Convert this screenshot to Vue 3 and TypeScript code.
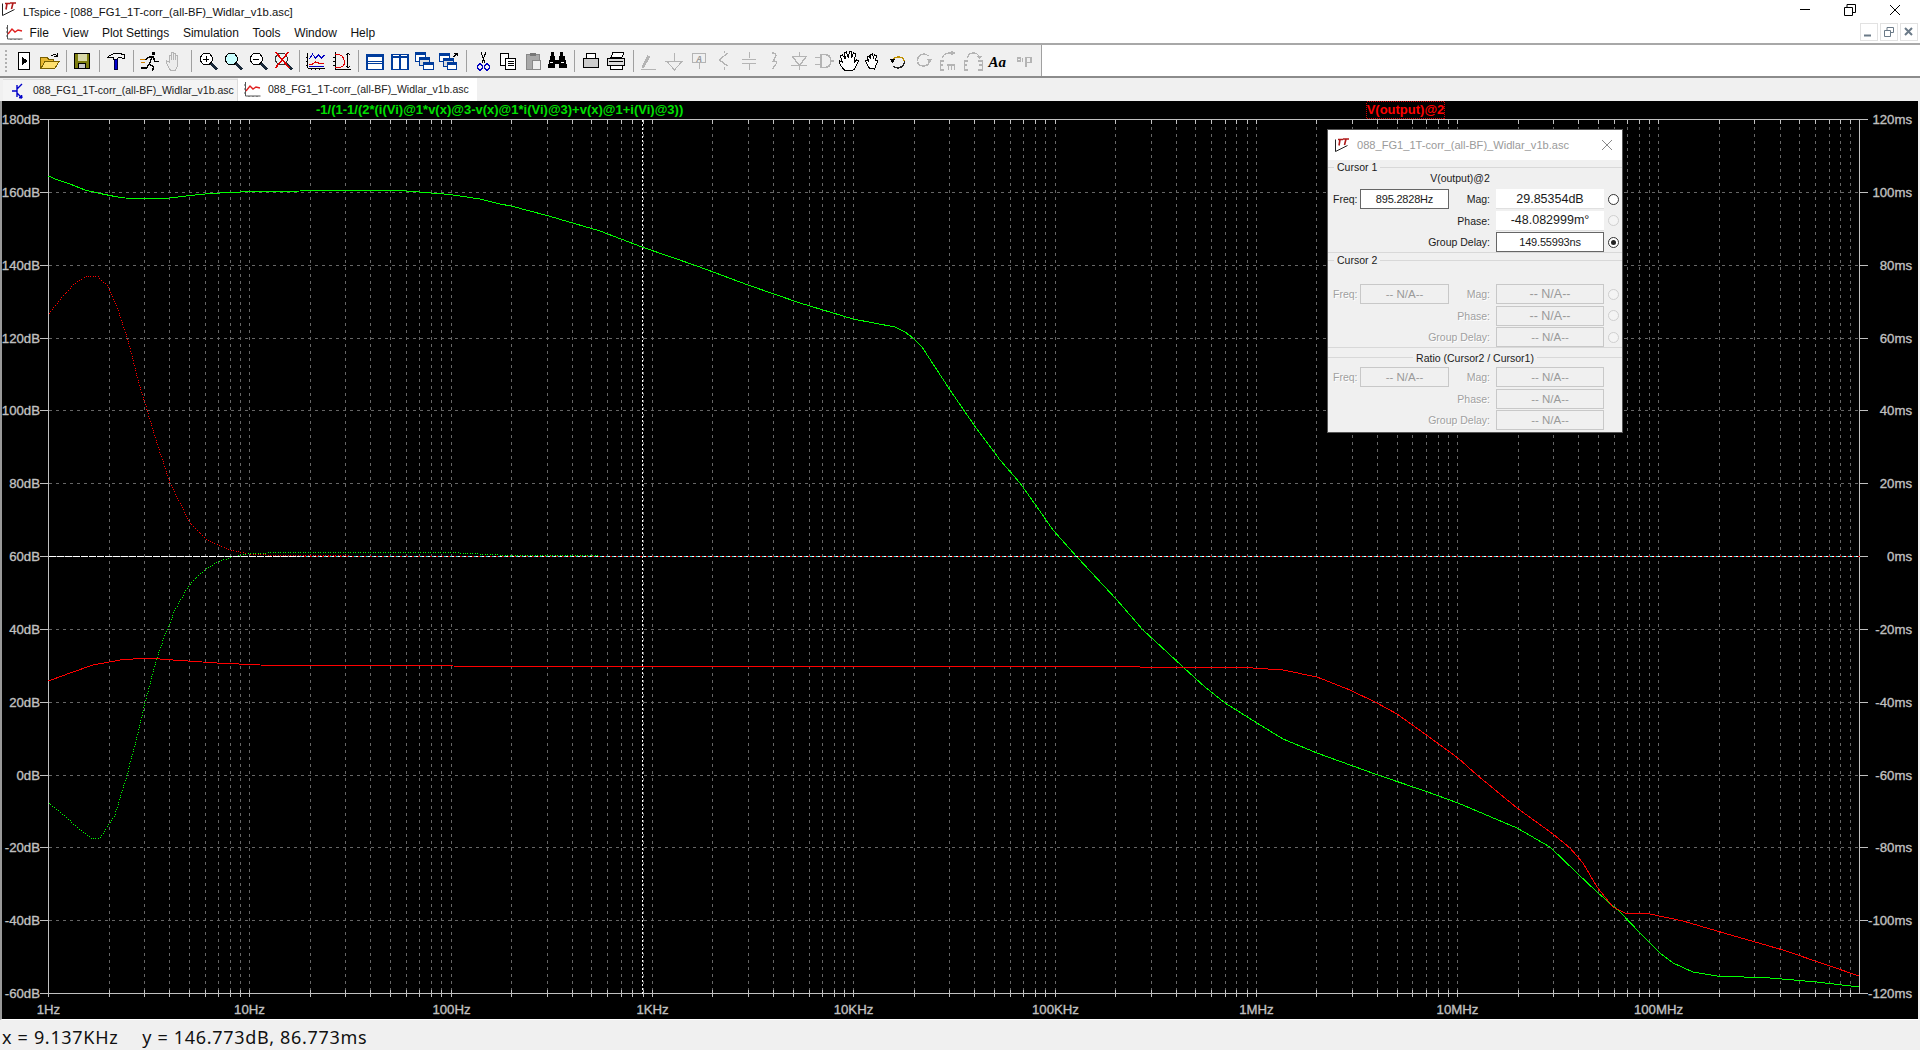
<script setup lang="ts">
interface Shape { d?: string; s?: string; f?: string; w?: number; t?: string; x?: number; y?: number; fs?: number; ff?: string }
interface Tool { sep?: boolean; shapes?: Shape[] }

const fileName = '088_FG1_1T-corr_(all-BF)_Widlar_v1b.asc'
const menus = ['File', 'View', 'Plot Settings', 'Simulation', 'Tools', 'Window', 'Help']

const decade = 201.3
const left = 48.5
const right = 1859.5
const top = 119.5
const bottom = 993.5
const xAt = (l: number) => Math.round(left + decade * l - 0.5) + 0.5
const majors = Array.from({ length: 9 }, (_, i) => xAt(i))
const verticals: { x: number; major: boolean }[] = []
for (let d = 0; d < 9; d++) {
  for (let m = 1; m < 10; m++) {
    const l = d + Math.log10(m)
    verticals.push({ x: xAt(l), major: m === 1 })
  }
}
const yLabels = Array.from({ length: 13 }, (_, i) => {
  const y = Math.round(top + (i * (bottom - top)) / 12 - 0.5) + 0.5
  return { y, db: `${180 - i * 20}dB`, ms: `${120 - i * 20}ms` }
})
const xLabels = ['1Hz', '10Hz', '100Hz', '1KHz', '10KHz', '100KHz', '1MHz', '10MHz', '100MHz']

const greenSolid = '48.5,176 55,179 70,184 85,190 100,193.5 115,196.5 125,198 150,198.5 170,198 190,195.5 210,193.5 240,192 280,191.5 320,190.5 400,190.5 450,194.5 480,199 500,204 511,206 547,215.5 600,231 642,247 697,266 748,285 800,303 853,319 895,327 905,332 913,338 922,347 950,390 974,425 1000,460 1020,483 1037,507 1053,530 1077,557 1117,600 1143,630 1154,640 1183,667 1205,687 1225,703 1257,723 1283,739 1317,753 1375,774 1425,791 1458,803 1517,828 1550,847 1577,873 1597,892 1620,912 1640,933 1660,953 1673,963 1693,972 1717,976 1770,978 1817,982 1859,987'
const redSolid = '48.5,681 70,673 93,665 120,660 147,658 173,660 217,663 260,665 300,665.5 600,666.5 1140,667 1253,668 1283,670 1317,677 1350,690 1377,703 1397,714 1425,734 1458,758 1477,775 1517,808 1553,834 1570,848 1583,863 1597,887 1613,907 1625,913 1650,914 1683,921 1717,931 1783,950 1827,965 1859,976'
const redDotsPts = '49,313 60,300 73,285 87,276 97,276 107,285 117,307 128,340 138,380 147,410 157,443 170,483 190,523 207,540 230,550 250,554 280,555.7 350,556'
const greenDotsPts = '49,803 66,817 80,830 92,839 100,838 110,823 115,815 127,775 135,745 145,703 155,665 163,640 175,610 185,592 195,579 207,568 220,561 233,557 247,554 273,552.7 340,552.3 450,552.5 500,555 600,556'

function dotted(points: string, step = 2.5): string {
  const pts = points.split(' ').map(p => p.split(',').map(Number))
  let out = ''
  let carry = 0
  for (let i = 1; i < pts.length; i++) {
    const [x0, y0] = pts[i - 1]
    const [x1, y1] = pts[i]
    const len = Math.hypot(x1 - x0, y1 - y0)
    let t = carry
    while (t < len) {
      const x = Math.floor(x0 + ((x1 - x0) * t) / len)
      const y = Math.floor(y0 + ((y1 - y0) * t) / len)
      out += `M${x} ${y}h1v1h-1z`
      t += step
    }
    carry = t - len
  }
  return out
}
const redDots = dotted(redDotsPts)
const greenDots = dotted(greenDotsPts)

const ltMark: Shape[] = [
  { d: 'M1.5 2.5v12l12-6', s: '#222', f: 'none' },
  { d: 'M4 2.5h5M6 2.5l-1 6M9 2h6M12 2l-1.5 6', s: '#b01818', w: 1.6 }
]
const plotMark: Shape[] = [
  { d: 'M2.5 1v14h15', s: '#555', f: 'none' },
  { d: 'M3 10l4-5 3 3 3-2 4 1', s: '#e02020', f: 'none', w: 1.4 },
  { d: 'M1 4h1M1 8h1M1 12h1M6 15v1M10 15v1M14 15v1', s: '#555' }
]

const G = '#b4b4b4'
const toolbar: Tool[] = [
  { shapes: [{ d: 'M6.5 3.5h11v17h-11z', s: '#000', f: '#fff' }, { d: 'M9.5 8l6 4-6 4z', f: '#000' }] },
  { shapes: [{ d: 'M3.5 19.5v-11h6l2 2h5v9z', s: '#7a6000', f: '#e8b830' }, { d: 'M3.5 19.5l4-7h14l-4 7z', s: '#7a6000', f: '#ffe070' }, { d: 'M14 7q3-3 6 0M20 4v3h-3', s: '#000', f: 'none' }] },
  { sep: true },
  { shapes: [{ d: 'M4.5 4.5h15v15h-15z', s: '#000', f: '#7f7f10' }, { d: 'M7.5 4.5h9v7h-9z', f: '#d8d8a8' }, { d: 'M8.5 14.5h7v5h-7z', s: '#000', f: '#c8c8c8' }] },
  { sep: true },
  { shapes: [{ d: 'M3.5 8q6-6 17-2v4q-4-2-7-1v1h-4v-1q-4-1-6-1z', s: '#000', f: '#f4f4f4' }, { d: 'M10 10h3.5v10h-3.5z', f: '#0000d0', s: '#000040' }] },
  { sep: true },
  { shapes: [{ d: 'M14 3h3v3h-3z', f: '#000' }, { d: 'M6 11l5-3 4 0 1 4 4 1M13 9l-2 6 4 3-1 4M11 15l-3 4H3', s: '#000', f: 'none', w: 1.4 }, { d: 'M2 10h5M3 13h4', s: '#d08000' }] },
  { shapes: [{ d: 'M8 21q-4-5-4-9l3 1V6h2v5V3h2v8V4h2v7V6h2v10q0 3-2 5z', s: G, f: '#ececec' }] },
  { sep: true },
  { shapes: [{ d: 'M10 4a6 6 0 1 0 .01 0z', s: '#000', f: '#fff' }, { d: 'M7 10h6M10 7v6', s: '#000' }, { d: 'M14.5 14.5l6 6', s: '#1a2a3a', w: 2.4 }] },
  { shapes: [{ d: 'M10 4a6 6 0 1 0 .01 0z', s: '#000', f: '#c8ffff' }, { d: 'M14.5 14.5l6 6', s: '#1a2a3a', w: 2.4 }] },
  { shapes: [{ d: 'M10 4a6 6 0 1 0 .01 0z', s: '#000', f: '#fff' }, { d: 'M7 10h6', s: '#000' }, { d: 'M14.5 14.5l6 6', s: '#1a2a3a', w: 2.4 }] },
  { shapes: [{ d: 'M10 4a6 6 0 1 0 .01 0z', s: '#333', f: '#e8f4f4' }, { d: 'M14.5 14.5l6 6', s: '#1a2a3a', w: 2.4 }, { d: 'M4 3l14 16M17 3L4 19', s: '#e00000', w: 1.5 }] },
  { sep: true },
  { shapes: [{ d: 'M3.5 19.5h17', s: '#000', f: 'none' }, { d: 'M3.5 4v15', s: '#000', f: 'none' }, { d: 'M5 10l3-5 3 4 3-3 3 3 3-3', s: '#0000c0', f: 'none' }, { d: 'M5 15h3l3-2 3 1h6', s: '#e00000', f: 'none' }, { d: 'M5 17h15', s: '#0000c0', f: 'none' }, { d: 'M3 8h-1M3 12h-1M3 16h-1M7 20v1M11 20v1M15 20v1', s: '#000' }] },
  { shapes: [{ d: 'M6.5 3v17h15', s: '#000', f: 'none' }, { d: 'M6 5q8 0 9 7t-9 7', s: '#e00000', f: 'none' }, { d: 'M18.5 4v15M16.5 6l2-2 2 2M16.5 17l2 2 2-2', s: '#000', f: 'none' }, { d: 'M6 8h-2M6 12h-2M6 16h-2', s: '#000' }] },
  { sep: true },
  { shapes: [{ d: 'M3.5 5.5h16v15h-16z', s: '#003c9c', f: '#fff', w: 1.4 }, { d: 'M3.5 7h16M3.5 12.5h16M3.5 14.5h16', s: '#003c9c', w: 1.6 }] },
  { shapes: [{ d: 'M3.5 5.5h16v15h-16z', s: '#003c9c', f: '#fff', w: 1.4 }, { d: 'M3.5 7.5h16', s: '#003c9c', w: 2 }, { d: 'M11.5 5.5v15', s: '#003c9c', w: 1.4 }] },
  { shapes: [{ d: 'M3.5 3.5h10v9h-10z', s: '#003c9c', f: '#fff' }, { d: 'M3.5 5h10', s: '#003c9c', w: 2 }, { d: 'M7.5 8.5h10v8h-10z', s: '#003c9c', f: '#ddd' }, { d: 'M7.5 10h10', s: '#003c9c', w: 2 }, { d: 'M11.5 13.5h10v7h-10z', s: '#003c9c', f: '#fff' }, { d: 'M11.5 15h10', s: '#003c9c', w: 2 }] },
  { shapes: [{ d: 'M2.5 4.5h10v8h-10z', s: '#003c9c', f: '#fff' }, { d: 'M2.5 6h10', s: '#003c9c', w: 2 }, { d: 'M6.5 9.5h10v8h-10z', s: '#003c9c', f: '#ddd' }, { d: 'M6.5 11h10', s: '#003c9c', w: 2 }, { d: 'M10.5 13.5h9v7h-9z', s: '#003c9c', f: '#fff' }, { d: 'M10.5 15h9', s: '#003c9c', w: 2 }, { d: 'M16 8l4-4M17 4h3v3', s: '#000', f: 'none' }] },
  { sep: true },
  { shapes: [{ d: 'M9.5 3l4 11M14.5 3l-4 11', s: '#000', f: 'none' }, { d: 'M8.5 15a2.5 3 0 1 0 .01 0zM15.5 15a2.5 3 0 1 0 .01 0z', s: '#0000c0', f: 'none', w: 1.4 }] },
  { shapes: [{ d: 'M4.5 4.5h8v12h-8z', s: '#000', f: '#fff' }, { d: 'M9.5 9.5h10v11h-10z', s: '#000', f: '#fff' }, { d: 'M11.5 12.5h6M11.5 14.5h6M11.5 16.5h6', s: '#000' }] },
  { shapes: [{ d: 'M5.5 5.5h13v15h-13z', s: '#888', f: '#a8a8a8' }, { d: 'M9 4h6v3H9z', f: '#777' }, { d: 'M11.5 11.5h8v9h-8z', s: '#888', f: '#eee' }] },
  { shapes: [{ d: 'M5 7h5v4h4V7h5l3 12h-8v-4h-4v4H2z', f: '#000' }, { d: 'M6 3h3v4H6zM15 3h3v4h-3z', f: '#000' }, { d: 'M5 13h3M16 13h3', s: '#fff' }] },
  { sep: true },
  { shapes: [{ d: 'M7.5 4.5h9v5h-9z', s: '#000', f: '#fff' }, { d: 'M4.5 9.5h15v9h-15z', s: '#000', f: '#ccc' }] },
  { shapes: [{ d: 'M8.5 3.5h11l-2 5h-11z', s: '#000', f: '#fff' }, { d: 'M3.5 9.5h17v7h-17z', s: '#000', f: '#ddd' }, { d: 'M6.5 16.5h12v4h-12z', s: '#000', f: '#fff' }, { d: 'M5 12h14', s: '#000' }] },
  { sep: true },
  { shapes: [{ d: 'M4 18L10 6l3 1.5-7 12z', f: G }, { d: 'M4 20.5h15', s: G }] },
  { shapes: [{ d: 'M12 4v8M3 12h18M5 13l7 8 7-8', s: G, f: 'none' }] },
  { shapes: [{ d: 'M5.5 4.5h13v9h-13zM12 14v6', s: G, f: 'none' }, { t: 'A', x: 9, y: 12.5, fs: 9, ff: 'Liberation Mono', f: '#999' }] },
  { shapes: [{ d: 'M15 4l-8 7 8 6M12 2v2M12 18v3', s: G, f: 'none', w: 1.3 }] },
  { shapes: [{ d: 'M12 3v6M12 15v6M5 10.5h14M5 14.5h14', s: G, f: 'none', w: 1.3 }] },
  { shapes: [{ d: 'M10 4q5 0 3 4t-2 4q5 0 2 4t-3 4', s: G, f: 'none', w: 1.3 }] },
  { shapes: [{ d: 'M5 7.5h14l-7 9zM4 16.5h16M12 3v4M12 17v4', s: G, f: 'none', w: 1.3 }] },
  { shapes: [{ d: 'M8.5 5.5v13h3q7 0 7-6.500t-7-6.500zM3 8.500h5M3 15.500h5M19 12h3', s: G, f: 'none', w: 1.5 }] },
  { shapes: [{ d: 'M8 21q-5-5-5-9l3 1-2-6 2-1 3 4-1-6 2-1 2 6 1-7h2v7l2-5 2 1-1 8 2-2 2 1-4 8q-2 2-4 2z', s: '#000', f: '#fff', w: 1 }] },
  { shapes: [{ d: 'M8 19q-3-4-4-7l2-1 1 1-1-4 2-1 1 3V6l2-1 1 4 1-3 2 1-1 4 2 0 0 2-3 7z', s: '#000', f: '#fff', w: 1 }] },
  { shapes: [{ d: 'M6 12a6.500 6.500 0 0 1 12 0', s: '#c09000', f: 'none', w: 1.4 }, { d: 'M18 12a6.500 6.500 0 0 1-11 5', s: '#222', f: 'none', w: 1.4 }, { d: 'M3 10h6l-3 4z', f: '#000' }] },
  { shapes: [{ d: 'M6 12a6.500 6.500 0 0 1 11-5M18 13a6.500 6.500 0 0 1-12 0', s: G, f: 'none', w: 1.4 }, { d: 'M15 10h6l-3 4z', f: G }] },
  { shapes: [{ d: 'M4 21v-9h4M4 16h3M4 21h4M12 16v5M15 16v5M18 16v5M11 16h8M6 9q1-5 7-5h4M15 2l3 2-3 2', s: G, f: 'none', w: 1.3 }] },
  { shapes: [{ d: 'M3 12h4M3 12v9h4M3 16h3M17 12h4v9h-4M18 16h3M6 9q1-5 6-5t6 5M16 7l2 2 2-2', s: G, f: 'none', w: 1.3 }] },
  { shapes: [{ t: 'Aa', x: 2, y: 18, fs: 15, ff: 'Liberation Serif', f: '#000' }] },
  { shapes: [{ d: 'M6 9h3v3H6zM14.500 8.500h5v5h-5zM14.500 8.500v9M11 9v4', s: G, f: 'none', w: 1.2 }] }
]

const rows = [
  { label: 'Freq:', value: '895.2828Hz', mag: 'Mag:', magv: '29.85354dB', radio: 'on' },
  { label: '', value: '', mag: 'Phase:', magv: '-48.082999m°', radio: 'off' },
  { label: '', value: '', mag: 'Group Delay:', magv: '149.55993ns', radio: 'dot' }
]
const naRows = ['Mag:', 'Phase:', 'Group Delay:']
</script>

<template>
  <div class="app">
    <header class="titlebar">
      <svg class="ticon" width="18" height="17" viewBox="0 0 18 17">
        <path v-for="(p, i) in ltMark" :key="i" :d="p.d" :stroke="p.s" :fill="p.f ?? 'none'" :stroke-width="p.w ?? 1" />
      </svg>
      <span class="ttext">LTspice - [{{ fileName }}]</span>
      <div class="wincontrols">
        <svg width="12" height="12" viewBox="0 0 12 12"><path d="M1 5.500h10" stroke="#000" fill="none" /></svg>
        <svg width="12" height="12" viewBox="0 0 12 12"><path d="M0.500 3.500h8v8h-8zM3 3.500v-3h8.500v8h-3" stroke="#000" fill="none" /></svg>
        <svg width="12" height="12" viewBox="0 0 12 12"><path d="M1 1l10 10M11 1L1 11" stroke="#000" fill="none" /></svg>
      </div>
    </header>

    <nav class="menubar">
      <svg class="micon" width="20" height="18" viewBox="0 0 20 18">
        <path v-for="(p, i) in plotMark" :key="i" :d="p.d" :stroke="p.s" :fill="p.f ?? 'none'" :stroke-width="p.w ?? 1" />
      </svg>
      <span v-for="m in menus" :key="m" class="menu">{{ m }}</span>
      <div class="mdi">
        <span class="mdibtn"><svg width="12" height="12" viewBox="0 0 12 12"><path d="M1 9.500h7" stroke="#6b7a88" stroke-width="2" /></svg></span>
        <span class="mdibtn"><svg width="12" height="12" viewBox="0 0 12 12"><path d="M1.500 4.500h6v6h-6zM4 4V1.500h6.500v5H8" stroke="#6b7a88" fill="none" /></svg></span>
        <span class="mdibtn"><svg width="12" height="12" viewBox="0 0 12 12"><path d="M2 2l7 7M9 2l-7 7" stroke="#6b7a88" stroke-width="2" /></svg></span>
      </div>
    </nav>

    <div class="toolrow">
      <div class="toolbar">
        <div class="grip"></div>
        <template v-for="(tool, i) in toolbar" :key="i">
          <i v-if="tool.sep" class="sep"></i>
          <svg v-else class="tool" width="24" height="24" viewBox="0 0 24 24">
            <template v-for="(p, j) in tool.shapes" :key="j">
              <text v-if="p.t" :x="p.x" :y="p.y" :font-size="p.fs" :font-family="p.ff" :fill="p.f" font-style="italic" font-weight="700">{{ p.t }}</text>
              <path v-else :d="p.d" :stroke="p.s ?? 'none'" :fill="p.f ?? 'none'" :stroke-width="p.w ?? 1" />
            </template>
          </svg>
        </template>
      </div>
    </div>

    <div class="tabs">
      <div class="tab">
        <svg width="18" height="18" viewBox="0 0 18 18"><path d="M4 9h5M9 3v12M9 7l5-5M9 11l5 5M14 16l-3-.5M14 16l-.5-3" stroke="#0000c8" stroke-width="1.400" fill="none" /></svg>
        <span>{{ fileName }}</span>
      </div>
      <div class="tab active">
        <svg width="20" height="18" viewBox="0 0 20 18">
          <path v-for="(p, i) in plotMark" :key="i" :d="p.d" :stroke="p.s" :fill="p.f ?? 'none'" :stroke-width="p.w ?? 1" />
        </svg>
        <span>{{ fileName }}</span>
      </div>
    </div>

    <main class="plot">
      <svg class="chart" width="1916" height="919" viewBox="2 101 1916 919">
        <g class="crisp">
          <path v-for="v in verticals.filter(q => q.x > left)" :key="'v' + v.x" :d="`M${v.x} ${top}V${bottom}`" class="grid" />
          <path v-for="r in yLabels.slice(1, 12)" :key="'h' + r.y" :d="`M${left} ${r.y}H${right}`" class="grid" />
          <path v-for="v in verticals" :key="'t' + v.x" :d="`M${v.x} ${top}v4M${v.x} ${bottom}v-4M${v.x} ${bottom}v3`" class="axis" />
          <path v-for="r in yLabels" :key="'k' + r.y" :d="`M40 ${r.y}h8.500M${right} ${r.y}h8`" class="axis" />
          <path :d="`M${left} ${top}H${right}V${bottom}H${left}Z`" class="axis" />

          <path :d="redDots" class="dotfill rf" />
          <path :d="greenDots" class="dotfill gf" />
          <polyline :points="greenSolid" class="green" />
          <polyline :points="redSolid" class="red" />

          <path d="M48.500 556.500H300" class="zw" />
          <path d="M300 556.500H1859.500" class="zc" />
          <path d="M300 556.500H1859.500" class="zr" />
          <path d="M300 556.500H1859.500" class="zy" />
          <path d="M642.500 119.500V993.500" class="cursor" />
        </g>
        <text v-for="r in yLabels" :key="'l' + r.y" x="40" :y="r.y + 4" text-anchor="end" class="lab">{{ r.db }}</text>
        <text v-for="r in yLabels" :key="'m' + r.y" x="1912" :y="r.y + 4" text-anchor="end" class="lab">{{ r.ms }}</text>
        <text v-for="(t, i) in xLabels" :key="t" :x="majors[i]" y="1014" text-anchor="middle" class="lab">{{ t }}</text>
        <text x="316" y="113.500" class="trace gtrace">-1/(1-1/(2*(i(Vi)@1*v(x)@3-v(x)@1*i(Vi)@3)+v(x)@1+i(Vi)@3))</text>
        <rect x="1366.500" y="101.500" width="78" height="17" class="tbox" />
        <text x="1405.500" y="113.500" text-anchor="middle" class="trace rtrace">V(output)@2</text>
      </svg>
    </main>

    <footer class="status">
      <span>x = 9.137KHz</span>
      <span>y = 146.773dB, 86.773ms</span>
    </footer>

    <section class="dialog">
      <div class="dtitle">
        <svg width="18" height="17" viewBox="0 0 18 17">
          <path v-for="(p, i) in ltMark" :key="i" :d="p.d" :stroke="p.s" :fill="p.f ?? 'none'" :stroke-width="p.w ?? 1" />
        </svg>
        <span>{{ fileName }}</span>
        <svg class="dclose" width="12" height="12" viewBox="0 0 12 12"><path d="M1 1l10 10M11 1L1 11" stroke="#888" fill="none" /></svg>
      </div>
      <div class="dbody">
        <div class="legend"><span>Cursor 1</span></div>
        <div class="vname">V(output)@2</div>
        <div class="grp first">
          <template v-for="r in rows" :key="r.mag">
            <span v-if="r.label" class="lb">{{ r.label }}</span>
            <span v-if="r.value" class="fld bordered small">{{ r.value }}</span>
            <span class="lb mg" :class="{ wide: !r.value }">{{ r.mag }}</span>
            <span class="fld" :class="r.radio === 'dot' ? 'bordered small' : 'plain'">{{ r.magv }}</span>
            <span class="radio" :class="r.radio"></span>
          </template>
        </div>
        <div class="line"></div>
        <div class="legend"><span>Cursor 2</span></div>
        <div class="grp na second">
          <template v-for="(m, i) in naRows" :key="m">
            <span v-if="i === 0" class="lb">Freq:</span>
            <span v-if="i === 0" class="fld off">-- N/A--</span>
            <span class="lb mg" :class="{ wide: i > 0 }">{{ m }}</span>
            <span class="fld off" :class="{ bigna: i < 2 }">-- N/A--</span>
            <span class="radio blank"></span>
          </template>
        </div>
        <div class="line"></div>
        <div class="legend center"><span>Ratio (Cursor2 / Cursor1)</span></div>
        <div class="grp na">
          <template v-for="(m, i) in naRows" :key="m">
            <span v-if="i === 0" class="lb">Freq:</span>
            <span v-if="i === 0" class="fld off">-- N/A--</span>
            <span class="lb mg" :class="{ wide: i > 0 }">{{ m }}</span>
            <span class="fld off">-- N/A--</span>
            <span></span>
          </template>
        </div>
      </div>
    </section>
  </div>
</template>

<style>
html, body { margin: 0; padding: 0; background: #fff; overflow: hidden; }
</style>

<style scoped>
.app {
  position: relative;
  width: 1920px;
  height: 1050px;
  display: flex;
  flex-direction: column;
  background: #fff;
  font-family: "Liberation Sans", Arial, sans-serif;
  font-size: 12px;
  color: #111;
  overflow: hidden;
}
.titlebar {
  height: 22px;
  display: flex;
  align-items: center;
  padding-left: 1px;
  gap: 4px;
  font-size: 11.300px;
  flex: none;
}
.ticon { margin-top: -3px; }
.ttext { padding-top: 1px; }
.wincontrols {
  margin-left: auto;
  display: flex;
  gap: 33px;
  padding-right: 19px;
  margin-top: -3px;
}
.menubar {
  height: 21px;
  display: flex;
  align-items: center;
  gap: 13.600px;
  padding-left: 5px;
  flex: none;
  border-bottom: 2px solid #a8a8a8;
  box-sizing: content-box;
}
.micon { margin-right: -9px; }
.mdi { margin-left: auto; display: flex; gap: 2px; padding-right: 2px; margin-top: -2px; }
.mdibtn {
  width: 16px;
  height: 16px;
  border: 1px solid #e2e2e2;
  display: flex;
  align-items: center;
  justify-content: center;
}
.toolrow { height: 31px; flex: none; border-bottom: 2px solid #8c8c8c; background: #fff; }
.toolbar {
  width: 1042px;
  height: 31px;
  background: #f0f0f0;
  border-right: 1px solid #a0a0a0;
  box-sizing: border-box;
  display: flex;
  align-items: center;
  padding-left: 12px;
  position: relative;
}
.grip {
  position: absolute;
  left: 5px;
  top: 5px;
  width: 2px;
  height: 22px;
  background: repeating-linear-gradient(#b0b0b0 0 2px, transparent 2px 4px);
}
.tool { flex: 0 0 24.880px; shape-rendering: crispEdges; overflow: visible; }
.sep { flex: 0 0 1px; height: 22px; background: #a0a0a0; margin: 0 3.850px; }
.tabs {
  height: 23px;
  background: #f0f0f0;
  display: flex;
  align-items: flex-end;
  flex: none;
  padding-left: 3px;
  box-sizing: border-box;
  font-size: 10.500px;
}
.tab {
  height: 22px;
  width: 235px;
  display: flex;
  align-items: center;
  gap: 7px;
  padding-left: 5px;
  box-sizing: border-box;
  color: #222;
  white-space: nowrap;
  border-top: 1px solid #dcdcdc;
  border-right: 1px solid #dcdcdc;
  background: #f4f4f4;
}
.tab span { margin-top: -2px; }
.tab.active {
  width: 239px;
  height: 23px;
  background: #fff;
  padding-left: 5px;
  gap: 5px;
  border: 0;
}
.plot {
  flex: 1;
  min-height: 0;
  background: #000;
  border-left: 2px solid #9a9a9a;
  border-right: 2px solid #f0f0f0;
  border-bottom: 1px solid #fff;
  position: relative;
}
.chart { display: block; }
.crisp path, .crisp polyline { fill: none; shape-rendering: crispEdges; }
.grid { stroke: #666; stroke-dasharray: 3 4; }
.axis { stroke: #c0c0c0; }
.green { stroke: #00ff00; }
.red { stroke: #ff0000; }
.crisp .dotfill { stroke: none; }
.crisp .rf { fill: #ff0000; }
.crisp .gf { fill: #00ff00; }
.zw { stroke: #fff; stroke-dasharray: 7 1; }
.zc { stroke: #40e0e0; stroke-dasharray: 2 4; }
.zr { stroke: #e00000; stroke-dasharray: 2 4; stroke-dashoffset: 2; }
.zy { stroke: #fff; stroke-dasharray: 2 4; stroke-dashoffset: 4; }
.cursor { stroke: #fff; stroke-dasharray: 2 2; }
.lab { font-size: 13.200px; fill: #c8c8c8; stroke: #b8b8b8; stroke-width: 0.35px; font-family: "Liberation Sans", sans-serif; }
.trace { font-size: 13px; font-weight: 700; font-family: "Liberation Sans", sans-serif; }
.gtrace { fill: #00e000; }
.rtrace { fill: #ff0000; }
.tbox { fill: none; stroke: #d00000; stroke-dasharray: 1 1; shape-rendering: crispEdges; }
.status {
  height: 30px;
  flex: none;
  background: #f0f0f0;
  display: flex;
  align-items: center;
  gap: 24px;
  padding-left: 2px;
  padding-top: 3px;
  box-sizing: border-box;
  font-size: 18px;
  letter-spacing: 0.680px;
  color: #111;
  font-family: "Noto Sans", sans-serif;
}
.dialog {
  position: absolute;
  left: 1328px;
  top: 130px;
  width: 294px;
  height: 302px;
  background: #f0f0f0;
  box-shadow: 0 0 0 1px #555;
  font-size: 10.500px;
  color: #1a1a1a;
  display: flex;
  flex-direction: column;
}
.dtitle {
  height: 30px;
  flex: none;
  background: #fff;
  display: flex;
  align-items: center;
  padding-left: 6px;
  gap: 5px;
  color: #9a9a9a;
  font-size: 11.100px;
}
.dclose { margin-left: auto; margin-right: 9px; }
.dbody { flex: 1; min-height: 0; }
.legend {
  height: 14px;
  display: flex;
  align-items: center;
  gap: 3px;
}
.legend::before { content: ""; width: 6px; height: 1px; background: #d8d8d8; }
.legend::after { content: ""; flex: 1; height: 1px; background: #d8d8d8; }
.legend.center { height: 19px; }
.legend.center::before { flex: 1; width: auto; }
.line { height: 1px; background: #d8d8d8; }
.vname { height: 14px; line-height: 14px; text-align: center; margin-right: 30px; margin-top: -3px; }
.grp {
  display: grid;
  grid-template-columns: 24px 92px 1fr 108px 18px;
  grid-auto-rows: 20px;
  row-gap: 1.500px;
  padding-left: 5px;
  align-items: center;
}
.first { margin-top: 4px; }
.second { margin-top: 17px; }
.grp > .fld:nth-child(2) { margin-left: 3px; }
.lb { text-align: right; white-space: nowrap; }
.mg { margin-right: 6px; }
.wide { grid-column: 1 / 4; }
.fld {
  height: 100%;
  box-sizing: border-box;
  display: flex;
  align-items: center;
  justify-content: center;
  white-space: nowrap;
}
.plain { background: #fff; font-size: 12.500px; border-bottom: 1px solid #e0e0e0; }
.bordered { background: #fff; border: 1px solid #666; }
.small { font-size: 11px; letter-spacing: -0.2px; }
.off { border: 1px solid #c8c8c8; color: #9a9a9a; font-size: 11.500px; }
.bigna { font-size: 12.500px; }
.na .lb { color: #a0a0a0; text-shadow: 1px 1px 0 #fff; }
.radio {
  justify-self: center;
  width: 11px;
  height: 11px;
  border-radius: 50%;
  box-sizing: border-box;
  border: 1px solid #333;
  background: #fff;
  position: relative;
}
.radio.off, .radio.blank { border-color: #cfcfcf; background: #f4f4f4; }
.radio.dot::after {
  content: "";
  position: absolute;
  left: 2px;
  top: 2px;
  width: 5px;
  height: 5px;
  border-radius: 50%;
  background: #222;
}
</style>
